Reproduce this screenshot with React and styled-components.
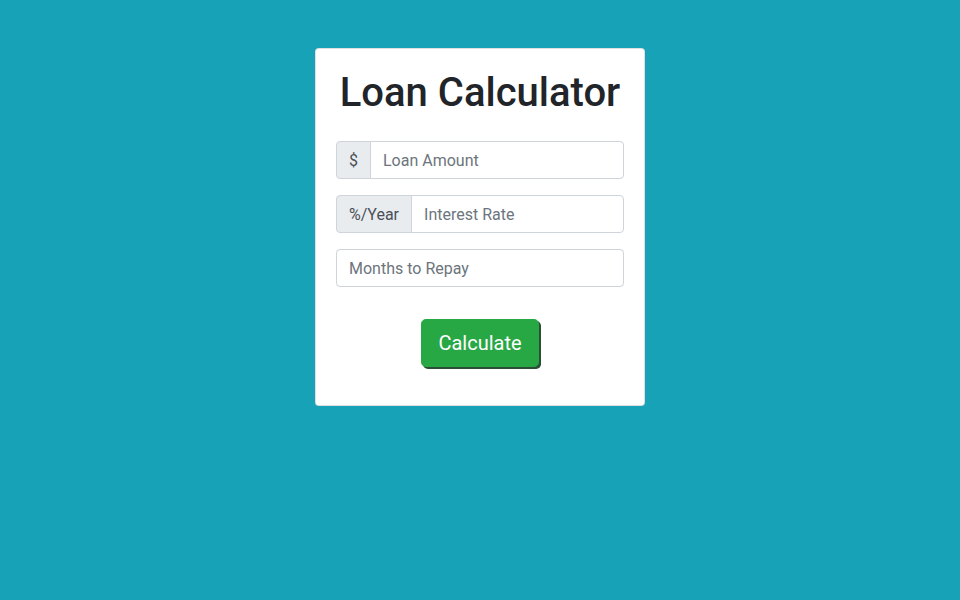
import React from "react";
import styled, { createGlobalStyle } from "styled-components";

const Global = createGlobalStyle`
  html, body { margin: 0; padding: 0; }
  body {
    background: #17a2b8;
    font-family: Roboto, "Liberation Sans", sans-serif;
    color: #212529;
    min-height: 600px;
  }
  * { box-sizing: border-box; }
`;

const Page = styled.div`
  display: flex;
  justify-content: center;
  padding-top: 48px;
`;

const Card = styled.div`
  width: 330px;
  background: #fff;
  border: 1px solid rgba(0,0,0,0.125);
  border-radius: 4px;
  padding: 20px 20px 38px;
`;

const Title = styled.h1`
  margin: 0 0 24px;
  font-size: 40px;
  line-height: 48px;
  font-weight: 500;
  text-align: center;
  color: #212529;
`;

const Group = styled.div`
  display: flex;
  margin-bottom: 16px;
  height: 38px;
`;

const Addon = styled.span`
  display: flex;
  align-items: center;
  padding: 0 12px;
  background: #e9ecef;
  border: 1px solid #ced4da;
  border-radius: 4px 0 0 4px;
  color: #495057;
  font-size: 16px;
  white-space: nowrap;
`;

const Input = styled.input`
  flex: 1;
  min-width: 0;
  height: 38px;
  padding: 6px 12px;
  font-family: inherit;
  font-size: 16px;
  color: #495057;
  background: #fff;
  border: 1px solid #ced4da;
  border-radius: ${(p) => (p.$attached ? "0 4px 4px 0" : "4px")};
  margin-left: ${(p) => (p.$attached ? "-1px" : "0")};
  outline: none;
  &::placeholder { color: #6c757d; opacity: 1; }
`;

const Actions = styled.div`
  display: flex;
  justify-content: center;
  padding-top: 16px;
`;

const Button = styled.button`
  height: 48px;
  padding: 0 16px;
  font-family: inherit;
  font-size: 20px;
  color: #fff;
  background: #28a745;
  border: 1px solid #28a745;
  border-radius: 4.8px;
  box-shadow: 2px 2px 0 #2b4f36;
  cursor: pointer;
`;

export default function App() {
  return (
    <>
      <Global />
      <Page>
        <Card>
          <Title>Loan Calculator</Title>
          <Group>
            <Addon>$</Addon>
            <Input $attached placeholder="Loan Amount" />
          </Group>
          <Group>
            <Addon>%/Year</Addon>
            <Input $attached placeholder="Interest Rate" />
          </Group>
          <Group>
            <Input placeholder="Months to Repay" />
          </Group>
          <Actions>
            <Button>Calculate</Button>
          </Actions>
        </Card>
      </Page>
    </>
  );
}
